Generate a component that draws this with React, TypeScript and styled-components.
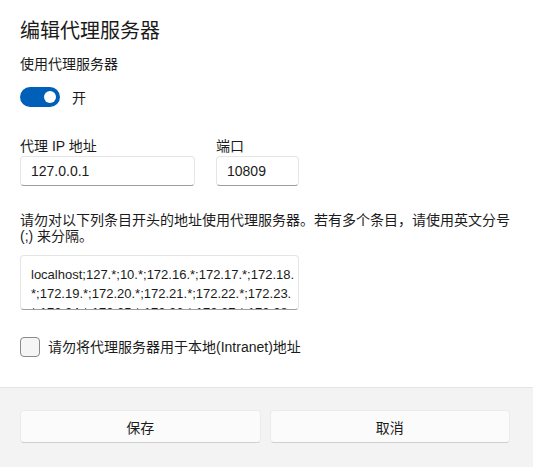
import styled, { createGlobalStyle } from "styled-components";

const GlobalStyle = createGlobalStyle`
  html, body {
    margin: 0;
    padding: 0;
    background: #ffffff;
  }
  body {
    font-family: "Liberation Sans", "Noto Sans CJK SC", sans-serif;
    color: #1b1b1b;
  }
  * {
    box-sizing: border-box;
  }
`;

const Dialog = styled.div`
  width: 533px;
  height: 467px;
  display: flex;
  flex-direction: column;
  background: #ffffff;
  overflow: hidden;
`;

const Body = styled.div`
  flex: 1;
  display: flex;
  flex-direction: column;
  padding: 17px 20px 0 20px;
`;

const Title = styled.h1`
  margin: 0;
  font-size: 20px;
  line-height: 28px;
  font-weight: 400;
`;

const Label = styled.div<{ $top?: number }>`
  margin-top: ${(p) => p.$top ?? 0}px;
  font-size: 14px;
  line-height: 19px;
`;

const ToggleRow = styled.div`
  display: flex;
  align-items: center;
  gap: 12px;
  margin-top: 13px;
  font-size: 14px;
`;

const Toggle = styled.button<{ $on: boolean }>`
  position: relative;
  width: 40px;
  height: 20px;
  padding: 0;
  border: none;
  border-radius: 10px;
  background: ${(p) => (p.$on ? "#005fb8" : "#f5f5f5")};
  cursor: pointer;

  &::after {
    content: "";
    position: absolute;
    top: 4px;
    left: ${(p) => (p.$on ? "24px" : "4px")};
    width: 12px;
    height: 12px;
    border-radius: 50%;
    background: #ffffff;
  }
`;

const FieldRow = styled.div`
  display: flex;
  gap: 21px;
  margin-top: 30px;
`;

const Field = styled.div<{ $width: number }>`
  display: flex;
  flex-direction: column;
  width: ${(p) => p.$width}px;
`;

const TextBox = styled.input`
  width: 100%;
  height: 30px;
  padding: 0 10px;
  font-family: inherit;
  font-size: 14px;
  color: #1b1b1b;
  background: #ffffff;
  border: 1px solid #e5e5e5;
  border-bottom-color: #9e9e9e;
  border-radius: 4px;
  outline: none;
`;

const Description = styled.p`
  margin: 26px 0 0 0;
  font-size: 14px;
  line-height: 16px;
`;

const BypassList = styled.textarea`
  width: 279px;
  height: 55px;
  margin-top: 11px;
  padding: 9px 3px 0 10px;
  font-family: inherit;
  font-size: 13px;
  line-height: 19px;
  color: #1b1b1b;
  background: #ffffff;
  border: 1px solid #e5e5e5;
  border-bottom-color: #9e9e9e;
  border-radius: 4px;
  resize: none;
  overflow: hidden;
  word-break: break-all;
  outline: none;
`;

const CheckRow = styled.label`
  display: flex;
  align-items: center;
  gap: 8px;
  margin-top: 27px;
  font-size: 14px;
  line-height: 20px;
`;

const CheckBox = styled.span`
  width: 20px;
  height: 20px;
  border: 1px solid #8a8a8a;
  border-radius: 4px;
  background: #f5f5f5;
`;

const Footer = styled.div`
  height: 80px;
  display: grid;
  grid-template-columns: 1fr 1fr;
  gap: 9px;
  align-items: start;
  padding: 22px 23px 0 20px;
  background: #f3f3f3;
  border-top: 1px solid #e5e5e5;
`;

const Button = styled.button`
  height: 33px;
  font-family: inherit;
  font-size: 14px;
  color: #1b1b1b;
  background: #fbfbfb;
  border: 1px solid #ebebeb;
  border-bottom-color: #cfcfcf;
  border-radius: 4px;
  cursor: pointer;
`;

const bypass =
  "localhost;127.*;10.*;172.16.*;172.17.*;172.18.*;172.19.*;172.20.*;172.21.*;172.22.*;172.23.*;172.24.*;172.25.*;172.26.*;172.27.*;172.28.*;172.29.*;172.30.*;172.31.*;192.168.*";

export default function App() {
  return (
    <>
      <GlobalStyle />
      <Dialog>
        <Body>
          <Title>编辑代理服务器</Title>
          <Label $top={10}>使用代理服务器</Label>
          <ToggleRow>
            <Toggle $on={true} aria-label="使用代理服务器" />
            <span>开</span>
          </ToggleRow>
          <FieldRow>
            <Field $width={175}>
              <Label>代理 IP 地址</Label>
              <TextBox defaultValue="127.0.0.1" />
            </Field>
            <Field $width={83}>
              <Label>端口</Label>
              <TextBox defaultValue="10809" />
            </Field>
          </FieldRow>
          <Description>
            请勿对以下列条目开头的地址使用代理服务器。若有多个条目，请使用英文分号 (;) 来分隔。
          </Description>
          <BypassList defaultValue={bypass} spellCheck={false} />
          <CheckRow>
            <CheckBox />
            <span>请勿将代理服务器用于本地(Intranet)地址</span>
          </CheckRow>
        </Body>
        <Footer>
          <Button>保存</Button>
          <Button>取消</Button>
        </Footer>
      </Dialog>
    </>
  );
}
